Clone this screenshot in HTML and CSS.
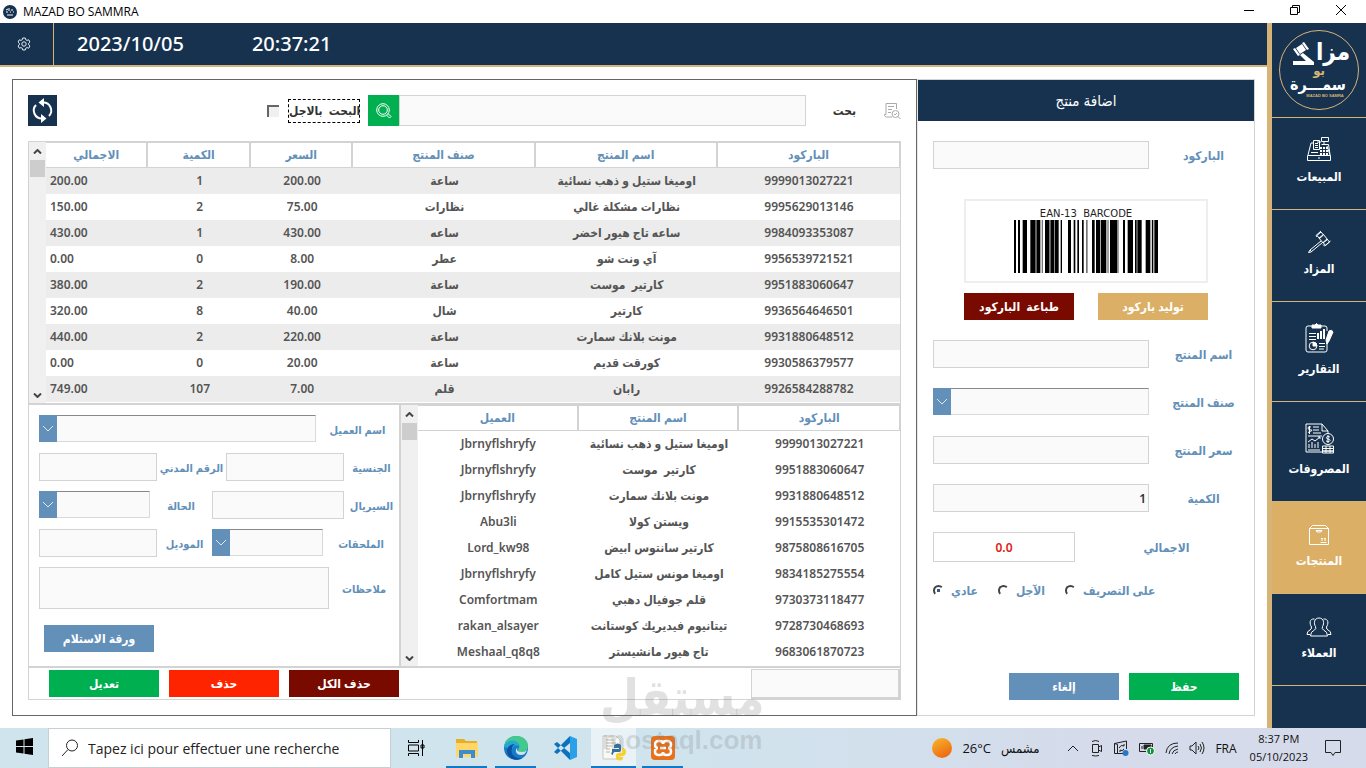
FILE: index.html
```html
<!DOCTYPE html>
<html lang="ar">
<head>
    <meta charset="UTF-8">
    <meta name="viewport" content="width=device-width, initial-scale=1.0">
    <title>MAZAD BO SAMMRA</title>
    <link rel="stylesheet" href="styles.css">
</head>
<body>
    <div class="titlebar">
        <svg class="app-icon" viewBox="0 0 14 14"><circle cx="7" cy="7" r="7" fill="#16324f"/><path d="M3 5l2-1M6 3v3M9 4v2M3 7h2M7 7h1M10 7h1M4 10h6" stroke="#fff" fill="none"/></svg>
        <span class="title">MAZAD BO SAMMRA</span>
        <button class="win-btn" aria-label="Minimize"><svg width="12" height="12" viewBox="0 0 12 12"><path d="M1 6.500h10"/></svg></button>
        <button class="win-btn" aria-label="Restore"><svg width="12" height="12" viewBox="0 0 12 12"><path d="M1.500 3.500h7v7h-7zM3.500 3.500v-2h7v7h-2"/></svg></button>
        <button class="win-btn" aria-label="Close"><svg width="12" height="12" viewBox="0 0 12 12"><path d="M1 1l10 10M11 1L1 11"/></svg></button>
    </div>

    <div class="app">
        <div class="main">
            <header class="header">
                <button class="settings" aria-label="Settings">
                    <svg width="14" height="14" viewBox="0 0 14 14"><path d="M5.700 1h2.600l.4 1.700 1.300.7 1.700-.6 1.200 2.200-1.200 1.200v1.600l1.200 1.200-1.200 2.200-1.700-.6-1.300.7-.4 1.700H5.700l-.4-1.700-1.300-.7-1.700.6L1.100 9l1.200-1.200V6.200L1.100 5l1.200-2.200 1.700.6 1.300-.7z"/><circle cx="7" cy="7" r="2.200"/></svg>
                </button>
                <span class="date">2023/10/05</span>
                <span class="time">20:37:21</span>
            </header>

            <div class="content">
                <section class="panel">
                    <div class="toolbar">
                        <button class="refresh" aria-label="Refresh">
                            <svg width="23" height="25" viewBox="0 0 23 25"><path d="M12 4.500a8 8 0 0 1 6 13.500M11 20.500a8 8 0 0 1-6-13.500" fill="none" stroke="#fff" stroke-width="2"/><path d="M13 0v9L7.500 4.500zM10 16v9l5.500-4.500z" fill="#fff"/></svg>
                        </button>
                        <input type="checkbox" id="searchLater" class="check">
                        <label for="searchLater" class="check-label">البحت&nbsp; بالاجل</label>
                        <button class="search-btn" aria-label="Search">
                            <svg width="16" height="16" viewBox="0 0 16 16"><circle cx="7" cy="7" r="6.300"/><circle cx="7" cy="7" r="4.300"/><path d="M10.500 12l3 3 1.500-1.500-3-3"/></svg>
                        </button>
                        <input type="text" id="search" class="input search-input">
                        <label for="search" class="search-label">بحت</label>
                        <svg class="search-doc" width="18" height="18" viewBox="0 0 18 18"><path d="M13.500 7V1.500H3v11H1.500c0 2 1 2.500 2 2.500H9M5 4.500h6M5 7.500h4M5 10.500h3"/><circle cx="12.500" cy="12" r="3.500"/><path d="M15 14.500l2.500 2.500M11 12l1 1 2-2"/></svg>
                    </div>

                    <div class="box">
                        <div class="grid-top">
                            <div class="scroll"><svg viewBox="0 0 9 5"><path d="M1 4.500l3.500-3.500L8 4.500"/></svg><i></i><svg viewBox="0 0 9 5"><path d="M1 .5L4.500 4 8 .5"/></svg></div>
                            <table class="products">
                                <thead>
                                    <tr><th class="w12">الاجمالي</th><th class="w12">الكمية</th><th class="w12">السعر</th><th>صنف المنتج</th><th>اسم المنتج</th><th>الباركود</th></tr>
                                </thead>
                                <tbody>
                                    <tr><td>200.00</td><td>1</td><td>200.00</td><td>ساعة</td><td>اوميغا ستيل و ذهب نسائية</td><td>9999013027221</td></tr>
                                    <tr><td>150.00</td><td>2</td><td>75.00</td><td>نظارات</td><td>نظارات مشكلة غالي</td><td>9995629013146</td></tr>
                                    <tr><td>430.00</td><td>1</td><td>430.00</td><td>ساعه</td><td>ساعه تاج هيور اخضر</td><td>9984093353087</td></tr>
                                    <tr><td>0.00</td><td>0</td><td>8.00</td><td>عطر</td><td>آي ونت شو</td><td>9956539721521</td></tr>
                                    <tr><td>380.00</td><td>2</td><td>190.00</td><td>ساعة</td><td>كارتير  موست</td><td>9951883060647</td></tr>
                                    <tr><td>320.00</td><td>8</td><td>40.00</td><td>شال</td><td>كارتير</td><td>9936564646501</td></tr>
                                    <tr><td>440.00</td><td>2</td><td>220.00</td><td>ساعة</td><td>مونت بلانك سمارت</td><td>9931880648512</td></tr>
                                    <tr><td>0.00</td><td>0</td><td>20.00</td><td>ساعة</td><td>كورقت قديم</td><td>9930586379577</td></tr>
                                    <tr><td>749.00</td><td>107</td><td>7.00</td><td>قلم</td><td>رابان</td><td>9926584288782</td></tr>
                                </tbody>
                            </table>
                        </div>

                        <div class="grid-bottom">
                            <form class="details">
                                <div class="row">
                                    <span class="combo w277"><span class="arrow"><svg viewBox="0 0 12 7"><path d="M1 1l5 5 5-5"/></svg></span><select id="client"><option></option></select></span>
                                    <label for="client">اسم العميل</label>
                                </div>
                                <div class="row">
                                    <input type="text" id="civil" class="input w118">
                                    <label for="civil">الرقم المدني</label>
                                    <input type="text" id="nation" class="input w118">
                                    <label for="nation" class="last">الجنسية</label>
                                </div>
                                <div class="row">
                                    <span class="combo w111"><span class="arrow"><svg viewBox="0 0 12 7"><path d="M1 1l5 5 5-5"/></svg></span><select id="state"><option></option></select></span>
                                    <label for="state">الحالة</label>
                                    <input type="text" id="serial" class="input w132">
                                    <label for="serial" class="last">السيريال</label>
                                </div>
                                <div class="row">
                                    <input type="text" id="model" class="input w118">
                                    <label for="model">الموديل</label>
                                    <span class="combo w111"><span class="arrow"><svg viewBox="0 0 12 7"><path d="M1 1l5 5 5-5"/></svg></span><select id="extras"><option></option></select></span>
                                    <label for="extras" class="wide">الملحقات</label>
                                </div>
                                <div class="row">
                                    <textarea id="notes" class="input notes"></textarea>
                                    <label for="notes">ملاحظات</label>
                                </div>
                                <button type="button" class="btn blue receipt">ورقة الاستلام</button>
                            </form>
                            <div class="scroll"><svg viewBox="0 0 9 5"><path d="M1 4.500l3.500-3.500L8 4.500"/></svg><i></i><svg viewBox="0 0 9 5"><path d="M1 .5L4.500 4 8 .5"/></svg></div>
                            <table class="clients">
                                <thead>
                                    <tr><th>العميل</th><th>اسم المنتج</th><th>الباركود</th></tr>
                                </thead>
                                <tbody>
                                    <tr><td>Jbrnyflshryfy</td><td>اوميغا ستيل و ذهب نسائية</td><td>9999013027221</td></tr>
                                    <tr><td>Jbrnyflshryfy</td><td>كارتير  موست</td><td>9951883060647</td></tr>
                                    <tr><td>Jbrnyflshryfy</td><td>مونت بلانك سمارت</td><td>9931880648512</td></tr>
                                    <tr><td>Abu3li</td><td>ويستن كولا</td><td>9915535301472</td></tr>
                                    <tr><td>Lord_kw98</td><td>كارتير سانتوس ابيض</td><td>9875808616705</td></tr>
                                    <tr><td>Jbrnyflshryfy</td><td>اوميغا مونس ستيل كامل</td><td>9834185275554</td></tr>
                                    <tr><td>Comfortmam</td><td>قلم جوفيال دهبي</td><td>9730373118477</td></tr>
                                    <tr><td>rakan_alsayer</td><td>تيتانيوم فيديريك كوستانت</td><td>9728730468693</td></tr>
                                    <tr><td>Meshaal_q8q8</td><td>تاج هيور مانشيستر</td><td>9683061870723</td></tr>
                                </tbody>
                            </table>
                        </div>

                        <div class="actions">
                            <button class="btn green">تعديل</button>
                            <button class="btn red">حذف</button>
                            <button class="btn maroon">حذف الكل</button>
                            <input type="text" class="input result" aria-label="Result">
                        </div>
                    </div>
                </section>

                <form class="product-form">
                    <h2>اضافة منتج</h2>
                    <div class="field">
                        <input type="text" id="barcode" class="input">
                        <label for="barcode">الباركود</label>
                    </div>
                    <div class="barcode">
                        <span>EAN-13&nbsp; BARCODE</span>
                        <svg width="144" height="53" viewBox="0 0 432 160" preserveAspectRatio="none">
                            <path d="M0 0h6v160H0zM12 0h6v160h-6zM26 0h13v160H26zM49 0h16v160H49zM67 0h12v160H67zM93 0h12v160H93zM109 0h12v160h-12zM123 0h11v160h-11zM140 0h4v160h-4zM162 0h9v160h-9zM179 0h5v160h-5zM190 0h5v160h-5zM204 0h5v160h-5zM234 0h8v160h-8zM246 0h13v160h-13zM261 0h16v160h-16zM288 0h22v160h-22zM327 0h6v160h-6zM341 0h16v160h-16zM363 0h5v160h-5zM370 0h13v160h-13zM395 0h13v160h-13zM414 0h4v160h-4zM421 0h11v160h-11z"/>
                            <path fill="#777" d="M65 0h2v160h-2zM83 0h4v160h-4zM105 0h4v160h-4zM121 0h2v160h-2zM216 0h5v160h-5zM280 0h4v160h-4zM310 0h4v160h-4zM409 0h3v160h-3z"/>
                        </svg>
                    </div>
                    <div class="barcode-actions">
                        <button type="button" class="btn maroon">طباعة&nbsp; الباركود</button>
                        <button type="button" class="btn gold">توليد باركود</button>
                    </div>
                    <div class="field">
                        <input type="text" id="name" class="input">
                        <label for="name">اسم المنتج</label>
                    </div>
                    <div class="field">
                        <span class="combo"><span class="arrow"><svg viewBox="0 0 12 7"><path d="M1 1l5 5 5-5"/></svg></span><select id="category"><option></option></select></span>
                        <label for="category">صنف المنتج</label>
                    </div>
                    <div class="field">
                        <input type="text" id="price" class="input">
                        <label for="price">سعر المنتج</label>
                    </div>
                    <div class="field">
                        <input type="text" id="qty" class="input" value="1">
                        <label for="qty">الكمية</label>
                    </div>
                    <div class="field total-field">
                        <input type="text" id="total" class="input total" value="0.0" readonly>
                        <label for="total">الاجمالي</label>
                    </div>
                    <div class="radios">
                        <input type="radio" name="kind" id="normal" checked><label for="normal">عادي</label>
                        <input type="radio" name="kind" id="later"><label for="later">الآجل</label>
                        <input type="radio" name="kind" id="consign"><label for="consign">على التصريف</label>
                    </div>
                    <div class="form-actions">
                        <button type="button" class="btn blue">إلغاء</button>
                        <button type="button" class="btn green">حفظ</button>
                    </div>
                </form>
            </div>
        </div>

        <nav class="sidebar">
            <div class="logo">
                <svg width="82" height="82" viewBox="0 0 82 82">
                    <circle cx="41" cy="41" r="39.500" fill="none" stroke="#d6b377"/>
                    <text x="55" y="31" class="logo-big">مزا</text>
                    <path d="M15 36h21v-3l-11-9-3 2 6 6H15z" fill="#fff"/>
                    <path d="M18 19l6-4 4 6-6 4z" fill="#fff"/><path d="M15 20l2-1 5 7-2 1zM24 14l2-1 5 7-2 1z" fill="#fff"/>
                    <text x="41" y="46" class="logo-mid">بو</text>
                    <text x="40" y="61" class="logo-bottom">سمـــرة</text>
                    <text x="47" y="68" class="logo-small">MAZAD BO SAMRA</text>
                </svg>
            </div>
            <a href="#" class="item">
                <svg width="26" height="26" viewBox="0 0 26 26"><path d="M2 19L5 7h2M11 6h4M21 10l3 9M1.500 19.500h23v5h-23zM7.500 4.500h6v9h-6zM15.500 1.500h7v4h-7zM18 5.500v3M15.500 8.500h7l1.500 10M9 7.500h3M9 9.500h3M9 11.500h3M12 22h2M5 16.500h7"/><path stroke-dasharray="2 1" stroke-width="2" d="M14 12h8M14 15h9M14 18h9"/></svg>
                <span>المبيعات</span>
            </a>
            <a href="#" class="item">
                <svg width="24" height="24" viewBox="0 0 24 24"><path d="M10 5.500L14 2l2.500 3-4 3.500zM16 12.500l4-3.500 2.500 3-4 3.500zM12 8l4.500-3.500 4 5-4.500 3.500zM14 11l-11 9-1.500 2.500L4 22l11.500-9.500M14 1l-5 4.500 1 1.500M23.500 11l-6 5-1.500-1.500M3 20l1.500 1.500"/></svg>
                <span>المزاد</span>
            </a>
            <a href="#" class="item tall">
                <svg width="30" height="32" viewBox="0 0 30 32"><path d="M8 4H4q-2 0-2 2v22q0 2 2 2h17q2 0 2-2v-7M17 4h4q2 0 2 2v3M5 11.500h7M5 14.500h7M5 17.500h7M15 21.500h6M15 24.500h6M15 27h5"/><path d="M8 6V3h3q1.500-3 3 0h3v3z" fill="#fff"/><path stroke-width="2" d="M14 17v-6M17 17V9M20 17V7"/><circle cx="9" cy="24" r="3.800"/><path d="M9 24v-4a4 4 0 0 1 4 4z" fill="#fff"/><path d="M23 22l-1-4 3-9q3-2 4 1l-4 9z" fill="#fff"/></svg>
                <span>التقارير</span>
            </a>
            <a href="#" class="item tall">
                <svg width="30" height="32" viewBox="0 0 30 32"><path d="M24 9v2M18 2H2v28h16M18 2l6 7h-6zM9 5h6M9 8h6M9 11h8M4 14h14M5 26V22M8 26v-6M11 26v-4M14 26v-6M4 28h12M4 20l4-3 3 2 5-4M14 15h2v2"/><circle cx="24" cy="17" r="5.500"/><path d="M26 15q-3.500-1.500-3.500.500 0 1.500 1.500 1.500 2 0 2 1.500 0 2-4 .5M24 13v8M7 5q-3-1-3 1t3 2-3 2.500M5.500 4v8M18.500 24h11v2.500h-11zM18.500 26.500h11V29h-11zM18.500 29h11v2h-11zM22 24v7M26 24v7"/></svg>
                <span>المصروفات</span>
            </a>
            <a href="#" class="item active">
                <svg width="22" height="22" viewBox="0 0 22 22"><path d="M1.500 4.500h19v16h-19zM1.500 4.500l3-3h13l3 3M8 6.500h6l-1 1.500H9zM12.500 18.500h6M14 17v-3M13 15l1-1 1 1M17 17v-3M16 15l1-1 1 1"/></svg>
                <span>المنتجات</span>
            </a>
            <a href="#" class="item">
                <svg width="26" height="22" viewBox="0 0 26 22"><path d="M9.500 10.500C7.500 7.500 8 2 13 2s5.500 5.500 3.500 8.500q-1 2.500 1 3.500 4 1.500 4 6h-17q0-4.500 4-6 2-1 1-3.500zM8.500 3C3 2.500 3.500 8 5.500 11q0 2.500-1.500 3-3 1-3 4.500h3M17.500 3C23 2.500 22.500 8 20.500 11q0 2.500 1.500 3 3 1 3 4.500h-3"/></svg>
                <span>العملاء</span>
            </a>
        </nav>
    </div>

    <footer class="taskbar">
        <button class="start" aria-label="Start"><svg width="17" height="17" viewBox="0 0 17 17"><path d="M0 2.500L7.500 1.500V8H0zM8.500 1.300L17 0v8H8.500zM0 9h7.500v6.500L0 14.500zM8.500 9H17v8l-8.500-1.300z"/></svg></button>
        <label class="task-search">
            <svg width="18" height="18" viewBox="0 0 18 18"><circle cx="11" cy="6.500" r="5.500"/><path d="M7 10.500L1 17"/></svg>
            <input type="text" placeholder="Tapez ici pour effectuer une recherche">
        </label>
        <button class="task view" aria-label="Task view"><svg width="18" height="16" viewBox="0 0 18 16"><path d="M1.500 0v2.500h10V0M1.500 16v-2.500h10V16M1.500 5h10v6h-10zM15.500 0v16M14 5h3v3h-3z" fill="none" stroke="#000"/></svg></button>
        <button class="task open" aria-label="Explorer"><svg width="24" height="24" viewBox="0 0 24 24"><path d="M1 3h8l2 2h11v16H1z" fill="#e8ae2b"/><path d="M1 7h22v14H1z" fill="#ffd767"/><path d="M4 22v-8h16v8h-4v-4H8v4z" fill="#3e8ccc"/></svg></button>
        <button class="task open" aria-label="Edge"><svg width="24" height="24" viewBox="0 0 24 24"><circle cx="12" cy="12" r="12" fill="#167cc9"/><path d="M0 12C0 4 6 0 12 0c8 0 12 5 12 10 0 4-3 6-6 6-4 0-5-2-3-4 1-4-3-6-6-6-5 0-8 2-9 6z" fill="#43c98e"/><path d="M0 11c2-8 14-9 16 0-3-3-8-1-8 4-4-5-8-3-8-4z" fill="#23a7d4"/><path d="M8 13c-2 5 3 10 10 9-4 3-11 2-14-3-3-6 1-11 7-11-2 1-3 3-3 5z" fill="#0d529f"/><path d="M14 11c-2 2-1 5 4 5 2 0 4-1 5-2-1 3-3 5-6 5-5 0-7-5-3-8z" fill="#d1e4ee"/></svg></button>
        <button class="task" aria-label="Code"><svg width="24" height="24" viewBox="0 0 24 24"><path d="M17 0l7 3v18l-7 3z" fill="#2aa0e8"/><path d="M17 0v7L4 18l-3-2zM17 24v-7L4 6 1 8z" fill="#0b72bd"/></svg></button>
        <button class="task open current" aria-label="Python"><svg width="24" height="26" viewBox="0 0 24 26"><path d="M1 1h13l4 4v19H1z" fill="#f8f8f4" stroke="#c9c9c2"/><path d="M4 5h8M4 8h10M4 11h6M4 14h4M4 17h4" stroke="#b7b7b0"/><path d="M10 17v-3h7v-1h-5v-3q4-3 7 0v5q0 2-3 2h-3q-2 0-2 3-3-1-1-3z" fill="#3670a0"/><path d="M20 13q4 0 4 4t-4 4h-3v1h4v2q-3 3-7 0v-4q0-2 3-2h3z" fill="#f6d12f"/></svg></button>
        <button class="task open" aria-label="XAMPP"><svg width="24" height="24" viewBox="0 0 24 24"><rect width="24" height="24" rx="4" fill="#e8711b"/><path d="M8 5q-4 0-4 3.500T7 12q-3 0-3 3.500T8 19h1q3 0 3-3 0 3 3 3h1q4 0 4-3.500T17 12q3 0 3-3.500T16 5h-1q-3 0-3 3 0-3-3-3zM9 12h6" fill="none" stroke="#fff" stroke-width="2.500"/></svg></button>
        <div class="tray">
            <svg width="20" height="20" viewBox="0 0 20 20"><defs><linearGradient id="sun" x2="0.500" y2="1"><stop stop-color="#f8b92c"/><stop offset="1" stop-color="#ee6b12"/></linearGradient></defs><circle cx="10" cy="10" r="10" fill="url(#sun)"/></svg>
            <span class="temp">26°C</span>
            <span class="weather">مشمس</span>
            <svg class="line" width="12" height="16" viewBox="0 0 12 16"><path d="M1 11l5-5 5 5"/></svg>
            <svg class="line" width="14" height="18" viewBox="0 0 14 18"><path d="M3.500 5.500h6v8h-6zM9.500 8l3-1.500v6l-3-1.500M3 2.500q4-2 7 0M3 16.500q4 1 7 0"/></svg>
            <svg class="line" width="16" height="18" viewBox="0 0 16 18"><path d="M10 14.500H1.500v-10l12-2.500v8M1.500 4.500l3 1v9M6 9q2-4 5-2V5M11 10q-2 3-4 1v2"/><circle cx="12.500" cy="14" r="3" fill="#2878c8" stroke="none"/></svg>
            <svg class="line" width="16" height="16" viewBox="0 0 16 16"><path d="M.5 3.500h13v8H.500zM3 6v3"/><path d="M5 5h7v4H5z" fill="#222"/><circle cx="11.500" cy="11" r="4" fill="#12913f" stroke="#fff"/><path d="M11.500 9v4" stroke="#fff"/></svg>
            <svg class="line" width="14" height="16" viewBox="0 0 14 16"><path d="M1 13Q2 3 13 3M4 14q1-7 9-8M7 14q1-4 6-5M10 14q1-2 3-2"/></svg>
            <svg class="line" width="16" height="16" viewBox="0 0 16 16"><path d="M1 6h2l4-4v12l-4-4H1zM9 6q2 2 0 4M11 4q3 4 0 8M13 2q4 6 0 12"/></svg>
            <span class="lang">FRA</span>
            <div class="clock"><span>8:37 PM</span><span>05/10/2023</span></div>
            <svg class="line note" width="18" height="18" viewBox="0 0 18 18"><path d="M1.500 1.500h15v12H11l-2 3-2-3H1.500z"/></svg>
        </div>
    </footer>

    <div class="watermark">
        <span class="wm-ar">مستقل</span>
        <span class="wm-en">mostaql.com</span>
    </div>
</body>
</html>
```

FILE: styles.css
```css
* {
    box-sizing: border-box;
}

body {
    margin: 0;
    height: 100vh;
    display: flex;
    flex-direction: column;
    overflow: hidden;
    position: relative;
    background-color: #fff;
    color: #555;
    font-family: "Noto Sans", "DejaVu Sans Condensed", sans-serif;
    font-size: 12px;
    font-weight: 600;
}

button, input, select, textarea {
    font: inherit;
    margin: 0;
    padding: 0;
    border: none;
}

button {
    cursor: pointer;
    background: none;
}

/* window title */
.titlebar {
    height: 23px;
    flex: none;
    display: flex;
    align-items: center;
    padding-left: 3px;
    padding-right: 2px;
    color: #000;
    font-family: "Open Sans", sans-serif;
    font-weight: 400;
}

.app-icon {
    width: 14px;
    height: 14px;
}

.title {
    margin-left: 6px;
    margin-right: auto;
}

.win-btn {
    width: 46px;
    height: 23px;
}

.win-btn svg {
    fill: none;
    stroke: #000;
}

.app {
    flex: 1;
    min-height: 0;
    display: flex;
}

.main {
    flex: 1;
    min-width: 0;
    display: flex;
    flex-direction: column;
}

/* header */
.header {
    height: 44px;
    display: flex;
    align-items: center;
    background-color: #16324f;
    border-bottom: 2px solid #d0b57e;
    color: #fff;
    font-size: 20px;
    font-weight: 500;
    line-height: 40px;
}

.settings {
    width: 54px;
    height: 100%;
    padding-right: 6px;
    border-right: 1px solid #d6b377;
}

.settings svg {
    fill: none;
    stroke: #e4ebf2;
}

.date {
    margin-left: 23px;
}

.time {
    margin-left: 68px;
}

.content {
    flex: 1;
    min-height: 0;
    display: flex;
    padding: 12px;
}

.panel {
    flex: 1;
    min-width: 0;
    display: flex;
    flex-direction: column;
    gap: 15px;
    padding: 15px;
    border: 1px solid #666;
}

/* search bar */
.toolbar {
    display: flex;
    align-items: center;
    height: 31px;
}

.refresh {
    width: 29px;
    height: 31px;
    margin-right: 210px;
    background-color: #16324f;
    display: flex;
    align-items: center;
    justify-content: center;
}

.check {
    appearance: none;
    width: 12px;
    height: 12px;
    background-color: #f0f0f0;
    border-top: 2px solid #666;
    border-left: 2px solid #666;
}

.check-label {
    width: 72px;
    height: 24px;
    line-height: 22px;
    margin: 0 8px 0 9px;
    border: 1px dashed #000;
    text-align: center;
    white-space: nowrap;
}

.search-btn {
    width: 31px;
    height: 31px;
    background-color: #00b050;
    display: flex;
    align-items: center;
    justify-content: center;
}

.search-btn svg {
    fill: none;
    stroke: #fff;
}

.input {
    height: 28px;
    background-color: #fafafa;
    border: 1px solid #d3d3d3;
    color: #333;
}

.search-input {
    flex: 1;
    min-width: 0;
    height: 31px;
}

.search-label {
    width: 77px;
    text-align: center;
}

.search-doc {
    fill: none;
    stroke: #aaa;
}

/* tables */
.box {
    flex: 1;
    display: flex;
    flex-direction: column;
    border: 1px solid #d3d3d3;
}

.grid-top, .grid-bottom {
    display: flex;
    height: 263px;
    border-bottom: 2px solid #d3d3d3;
}

.scroll {
    width: 17px;
    flex: none;
    display: flex;
    flex-direction: column;
    align-items: center;
    padding: 7px 0 5px;
    background-color: #f0f0f0;
}

.scroll svg {
    width: 9px;
    height: 5px;
    fill: none;
    stroke: #444;
    stroke-width: 2;
}

.scroll i {
    width: 15px;
    height: 17px;
    margin-top: 6px;
    margin-bottom: auto;
    background-color: #cdcdcd;
}

table {
    width: 100%;
    min-width: 0;
    height: 260px;
    border-collapse: separate;
    border-spacing: 0;
    table-layout: fixed;
}

th, td {
    height: 26px;
    padding: 0;
    text-align: center;
    white-space: pre;
    font-weight: 600;
    line-height: 20px;
}

th {
    color: #6390b9;
    border: 1px solid #d3d3d3;
    border-left-width: 0;
    border-right-width: 2px;
}

th:last-child {
    border-right-width: 1px;
}

.w12 {
    width: 12%;
}

.products tbody tr:nth-child(odd) {
    background-color: #ececec;
}

.products td:first-child {
    text-align: left;
    padding-left: 4px;
}

/* details form */
.details {
    width: 372px;
    flex: none;
    display: flex;
    flex-direction: column;
    gap: 10px;
    padding: 10px 0 0 10px;
    border-right: 2px solid #d3d3d3;
}

label {
    color: #6390b9;
}

.toolbar label {
    color: #333;
}

.row {
    display: flex;
    align-items: center;
    min-height: 28px;
}

.row label {
    flex: 1;
    text-align: center;
    white-space: nowrap;
    font-size: 11px;
}

.row .last {
    flex: 0 0 55px;
}

.row .wide {
    flex: 0 0 76px;
}

.w111 {
    width: 111px;
}

.w118 {
    width: 118px;
}

.w132 {
    width: 132px;
}

.w277 {
    width: 277px;
}

.notes {
    width: 290px;
    height: 42px;
    resize: none;
}

.combo {
    display: flex;
    height: 27px;
    margin-bottom: 1px;
}

.arrow {
    width: 18px;
    background-color: #6390b9;
    display: flex;
    align-items: center;
    justify-content: center;
}

.arrow svg {
    width: 12px;
    height: 7px;
    fill: none;
    stroke: #dce8f3;
}

select {
    flex: 1;
    min-width: 0;
    appearance: none;
    border: 1px solid #d9d9d9;
    border-top-color: #888;
    border-left: none;
    border-radius: 0;
    background-color: #fafafa;
}

.btn {
    width: 110px;
    height: 27px;
    color: #fff;
}

.blue {
    background-color: #6390b9;
}

.green {
    background-color: #00b050;
}

.red {
    background-color: #ff2400;
}

.maroon {
    background-color: #780a00;
}

.gold {
    background-color: #dbaf66;
}

.receipt {
    margin: 6px 0 0 5px;
}

.actions {
    flex: 1;
    display: flex;
    align-items: center;
    gap: 10px;
    padding-left: 20px;
}

.result {
    width: 149px;
    height: 30px;
    margin-left: auto;
    border-width: 1px 2px 2px 1px;
}

/* product form */
.product-form {
    width: 338px;
    flex: none;
    display: flex;
    flex-direction: column;
    gap: 20px;
    padding-bottom: 15px;
    border: 1px solid #d3d3d3;
    border-left-color: #e8e8e8;
}

h2 {
    margin: 0;
    height: 41px;
    line-height: 40px;
    background-color: #16324f;
    color: #fff;
    text-align: center;
    font-size: 15px;
    font-weight: 500;
}

.field {
    display: flex;
    align-items: center;
    height: 28px;
    padding-left: 15px;
}

.field .input, .field .combo {
    width: 216px;
    padding: 0 2px;
    text-align: right;
}

.field .combo {
    padding: 0;
}

.field label {
    flex: 1;
    padding-left: 4px;
    text-align: center;
}

.barcode {
    width: 244px;
    height: 84px;
    margin: 10px auto 0 46px;
    padding-top: 7px;
    border: 2px solid #eee;
    display: flex;
    flex-direction: column;
    align-items: center;
    color: #222;
    font: 10px/12px "DejaVu Sans", sans-serif;
}

.barcode-actions {
    display: flex;
    gap: 24px;
    margin: -10px 0 0 46px;
}

.total-field {
    height: 30px;
}

.field .total {
    width: 142px;
    height: 30px;
    background-color: #fff;
    color: #e02010;
    text-align: center;
}

.radios {
    display: flex;
    align-items: center;
    padding-left: 15px;
}

.radios input {
    appearance: none;
    width: 11px;
    height: 11px;
    border: 2px solid transparent;
    border-top-color: #444;
    border-left-color: #444;
    border-radius: 50%;
}

.radios input:checked {
    background: radial-gradient(circle, #345a80 2px, transparent 2px);
}

.radios label {
    margin: 0 20px 0 7px;
}

.form-actions {
    display: flex;
    justify-content: flex-end;
    gap: 10px;
    margin-top: auto;
    padding-right: 15px;
}

/* side menu */
.sidebar {
    width: 99px;
    flex: none;
    background-color: #16324f;
    border-left: 5px solid #d6b377;
    display: flex;
    flex-direction: column;
}

.logo {
    height: 95px;
    border-bottom: 1px solid #d6b377;
    padding: 6px;
}

.logo text {
    fill: #fff;
    font-family: "DejaVu Sans Condensed", sans-serif;
    font-weight: 700;
    text-anchor: middle;
}

.logo .logo-big {
    font-size: 24px;
}

.logo .logo-mid {
    fill: #d6b377;
    font-size: 13px;
}

.logo .logo-bottom {
    font-size: 16px;
}

.logo .logo-small {
    fill: #d6b377;
    font-family: "Liberation Sans", sans-serif;
    font-size: 4px;
}

.item {
    height: 92px;
    padding-bottom: 22px;
    border-bottom: 1px solid #d6b377;
    display: flex;
    flex-direction: column;
    align-items: center;
    justify-content: flex-end;
    gap: 5px;
    color: #fff;
    line-height: 20px;
    text-decoration: none;
}

.item svg {
    fill: none;
    stroke: #fff;
}

.tall {
    height: 100px;
}

.active {
    background-color: #dbaf66;
}

/* taskbar */
.taskbar {
    height: 40px;
    flex: none;
    display: flex;
    align-items: center;
    background-image: linear-gradient(to right, #cfe4ec, #d0e4ee 50%, #d5dbea 80%);
    color: #111;
    font-family: "Open Sans", "DejaVu Sans Condensed", sans-serif;
    font-weight: 400;
}

.start {
    width: 48px;
    height: 40px;
}

.task-search {
    width: 343px;
    height: 40px;
    display: flex;
    align-items: center;
    gap: 9px;
    padding-left: 12px;
    background-color: #fff;
    border: 1px solid #c5cfd4;
}

.task-search svg {
    fill: none;
    stroke: #222;
}

.task-search input {
    flex: 1;
    min-width: 0;
    font-size: 14px;
}

.task-search input::placeholder {
    color: #222;
}

.task {
    width: 49px;
    height: 40px;
    display: flex;
    align-items: center;
    justify-content: center;
    border-bottom: 2px solid transparent;
    border-top: 2px solid transparent;
}

.view {
    margin-right: 2px;
}

.open {
    width: 41px;
    margin: 0 4px;
    border-bottom-color: #1278c8;
}

.current {
    width: 45px;
    margin: 0 2px;
    background-color: #e9f2f7;
    border-top-color: #e9f2f7;
}

.tray {
    margin-left: auto;
    padding-right: 24px;
    display: flex;
    align-items: center;
    gap: 10px;
}

.line {
    fill: none;
    stroke: #222;
}

.temp {
    font-size: 13px;
}

.weather {
    font-size: 13px;
    padding-right: 18px;
}

.lang {
    margin-right: 3px;
}

.clock {
    display: flex;
    flex-direction: column;
    align-items: center;
    font-size: 11px;
    line-height: 18px;
}

.note {
    margin-left: 6px;
}

/* watermark lies over everything */
.watermark {
    position: absolute;
    left: 600px;
    bottom: 14px;
    display: flex;
    flex-direction: column;
    align-items: center;
    color: rgba(120, 120, 120, 0.22);
    pointer-events: none;
}

.wm-ar {
    font: 700 50px/56px "DejaVu Sans Condensed", sans-serif;
}

.wm-en {
    font: 700 26px/28px "Liberation Sans", sans-serif;
}
```
